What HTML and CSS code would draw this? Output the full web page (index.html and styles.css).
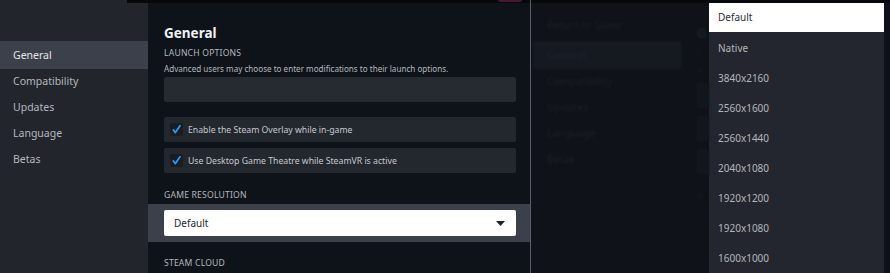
FILE: index.html
```html
<!DOCTYPE html>
<html>
<head>
<meta charset="utf-8">
<link rel="stylesheet" href="styles.css">
</head>
<body>
<div class="screen">
  <div class="app">
    <div class="topbar">
      <div class="topbar-side"></div>
      <div class="topbar-rest"><span class="accent"></span></div>
    </div>
    <div class="body">
      <nav class="sidebar">
        <div class="nav-item active">General</div>
        <div class="nav-item">Compatibility</div>
        <div class="nav-item">Updates</div>
        <div class="nav-item">Language</div>
        <div class="nav-item">Betas</div>
      </nav>
      <main class="main">
        <h1 class="title">General</h1>
        <div class="section-label">LAUNCH OPTIONS</div>
        <div class="desc">Advanced users may choose to enter modifications to their launch options.</div>
        <div class="text-input"></div>
        <div class="check-row first">
          <span class="checkbox"><svg width="11" height="11" viewBox="0 0 11 11"><path d="M2.2 5.8 L4.4 8.6 L9 1.8" fill="none" stroke="#2b9bff" stroke-width="1.7" stroke-linecap="round" stroke-linejoin="round"/></svg></span>
          <span class="check-label">Enable the Steam Overlay while in-game</span>
        </div>
        <div class="check-row">
          <span class="checkbox"><svg width="11" height="11" viewBox="0 0 11 11"><path d="M2.2 5.8 L4.4 8.6 L9 1.8" fill="none" stroke="#2b9bff" stroke-width="1.7" stroke-linecap="round" stroke-linejoin="round"/></svg></span>
          <span class="check-label">Use Desktop Game Theatre while SteamVR is active</span>
        </div>
        <div class="section-label res-label">GAME RESOLUTION</div>
        <div class="select-band">
          <div class="select">
            <span>Default</span>
            <svg width="9" height="5" viewBox="0 0 9 5"><path d="M0 0 H9 L4.5 5 Z" fill="#1e2126"/></svg>
          </div>
        </div>
        <div class="section-label cloud-label">STEAM CLOUD</div>
      </main>
    </div>
  </div>
  <div class="divider"></div>
  <div class="overlay">
    <div class="overlay-top"></div>
    <div class="overlay-body">
      <div class="ghost">
        <div class="ghost-side">
          <div class="ghost-top">Return to Game</div>
          <div class="ghost-item active">General</div>
          <div class="ghost-item">Compatibility</div>
          <div class="ghost-item">Updates</div>
          <div class="ghost-item">Language</div>
          <div class="ghost-item">Betas</div>
        </div>
        <div class="ghost-main">
          <div class="ghost-title">G</div>
          <div class="ghost-label">L</div>
          <div class="ghost-desc">A</div>
          <div class="ghost-box"></div>
          <div class="ghost-box"></div>
          <div class="ghost-box"></div>
          <div class="ghost-label2">G</div>
        </div>
      </div>
      <div class="menu">
        <div class="menu-item selected">Default</div>
        <div class="menu-item">Native</div>
        <div class="menu-item">3840x2160</div>
        <div class="menu-item">2560x1600</div>
        <div class="menu-item">2560x1440</div>
        <div class="menu-item">2040x1080</div>
        <div class="menu-item">1920x1200</div>
        <div class="menu-item">1920x1080</div>
        <div class="menu-item">1600x1000</div>
      </div>
      <div class="menu-gap"></div>
    </div>
  </div>
</div>
</body>
</html>
```

FILE: styles.css
```css
* { box-sizing: border-box; }
html, body { margin: 0; padding: 0; }
body {
  width: 890px;
  height: 273px;
  overflow: hidden;
  background: #0f1218;
  font-family: "Noto Sans", "Open Sans", sans-serif;
}
.screen {
  display: flex;
  width: 890px;
  height: 273px;
  overflow: hidden;
}
.app {
  width: 530px;
  flex: none;
  display: flex;
  flex-direction: column;
  background: #0e131a;
}
.topbar {
  display: flex;
  height: 3px;
  flex: none;
}
.topbar-side {
  width: 127px;
  background: #22252c;
}
.topbar-rest {
  flex: 1;
  height: 3px;
  background: #07080b;
  display: flex;
}
.accent {
  margin-left: 371px;
  width: 24px;
  height: 2px;
  background: #4a1733;
  border-radius: 0 0 3px 3px;
}
.body {
  flex: 1;
  display: flex;
  min-height: 0;
}
.sidebar {
  width: 148px;
  flex: none;
  background: #22252c;
  padding-top: 39px;
}
.nav-item {
  height: 26px;
  line-height: 26px;
  padding-left: 13px;
  font-size: 10.5px;
  color: #b5b9bf;
}
.nav-item.active {
  height: 28px;
  line-height: 28px;
  margin: -1px 0;
  background: #3b404b;
  color: #e4e6e8;
}
.main {
  flex: 1;
  padding: 21px 14px 0 16px;
  min-width: 0;
}
.title {
  margin: 0;
  font-size: 13.5px;
  line-height: 18px;
  font-weight: 700;
  color: #f0f2f4;
}
.section-label {
  margin-top: 5px;
  font-size: 8.6px;
  line-height: 12px;
  letter-spacing: 0.2px;
  color: #b4b8bd;
}
.desc {
  margin-top: 4px;
  font-size: 8.1px;
  line-height: 12px;
  color: #b4b8bd;
  white-space: nowrap;
}
.text-input {
  margin-top: 2px;
  height: 25px;
  background: #262a31;
  border-radius: 2px;
}
.check-row {
  margin-top: 6px;
  height: 25px;
  background: #23272e;
  border-radius: 2px;
  display: flex;
  align-items: center;
  padding-left: 6px;
}
.check-row.first { margin-top: 15px; }
.checkbox {
  width: 13px;
  height: 13px;
  border-radius: 2px;
  background: #191c22;
  display: flex;
  align-items: center;
  justify-content: center;
  margin-right: 5px;
}
.check-label {
  font-size: 8.7px;
  color: #c6cace;
  white-space: nowrap;
}
.res-label { margin-top: 16px; }
.select-band {
  margin: 3px -14px 0 -16px;
  padding: 6px 14px 6px 16px;
  background: #3b404b;
}
.select {
  height: 26px;
  background: #ffffff;
  border-radius: 2px;
  display: flex;
  align-items: center;
  justify-content: space-between;
  padding: 0 11px 0 10px;
  font-size: 10px;
  color: #23262c;
}
.cloud-label { margin-top: 15px; }
.divider {
  width: 1px;
  flex: none;
  background: #5a5e66;
}
.overlay {
  flex: 1;
  display: flex;
  flex-direction: column;
  background: #0f1218;
  min-width: 0;
}
.overlay-top {
  height: 3px;
  flex: none;
  background: #07080b;
}
.overlay-body {
  flex: 1;
  display: flex;
  min-height: 0;
}
.ghost {
  width: 178px;
  flex: none;
  display: flex;
  padding-left: 2px;
  filter: blur(1.3px);
  overflow: hidden;
}
.ghost-side {
  width: 149px;
  flex: none;
  padding-top: 12px;
}
.ghost-top {
  height: 20px;
  line-height: 20px;
  padding-left: 14px;
  font-size: 10px;
  color: #1c2029;
  margin-bottom: 7px;
}
.ghost-item {
  height: 26px;
  line-height: 26px;
  padding-left: 14px;
  font-size: 10.5px;
  color: #1d212a;
}
.ghost-item.active {
  height: 28px;
  line-height: 28px;
  margin: -1px 0;
  background: #151920;
  color: #20252e;
}
.ghost-main {
  flex: 1;
  padding: 21px 0 0 15px;
  overflow: hidden;
  white-space: nowrap;
}
.ghost-title {
  font-size: 13.5px;
  font-weight: 700;
  line-height: 18px;
  color: #1e222b;
}
.ghost-label {
  margin-top: 5px;
  font-size: 8.6px;
  line-height: 12px;
  color: #1b1f27;
}
.ghost-desc {
  margin-top: 4px;
  font-size: 7.8px;
  line-height: 12px;
  color: #1b1f27;
}
.ghost-box {
  margin-top: 8px;
  height: 25px;
  background: #13171d;
}
.ghost-label2 {
  margin-top: 16px;
  font-size: 8.6px;
  line-height: 12px;
  color: #1b1f27;
}
.menu {
  width: 175px;
  flex: none;
  background: #23262e;
  overflow: hidden;
}
.menu-item {
  height: 30px;
  line-height: 30px;
  padding-left: 9px;
  font-size: 10px;
  color: #b3b7bd;
}
.menu-item.selected {
  height: 29px;
  line-height: 29px;
  margin-bottom: 1px;
  background: #ffffff;
  color: #2a2d33;
}
.menu-gap {
  flex: 1;
  background: #0e1117;
}
```
